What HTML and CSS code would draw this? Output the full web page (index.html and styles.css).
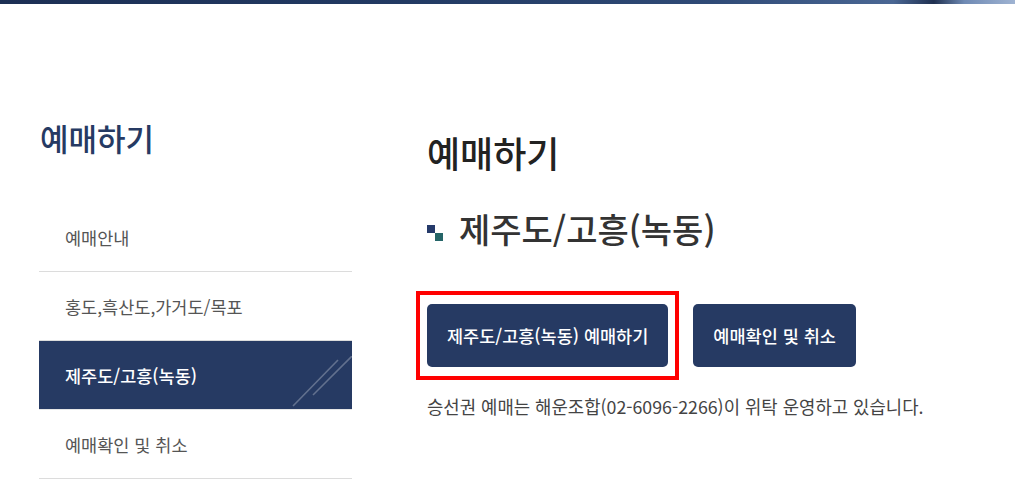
FILE: index.html
```html
<!DOCTYPE html>
<html lang="ko">
<head>
<meta charset="utf-8">
<title>예매하기</title>
<link rel="stylesheet" href="styles.css">
</head>
<body>
<div class="top-strip"></div>
<div class="page">
  <aside class="sidebar">
    <h2 class="side-title">예매하기</h2>
    <ul class="side-menu">
      <li class="side-item"><a href="#">예매안내</a></li>
      <li class="side-item"><a href="#">홍도,흑산도,가거도/목포</a></li>
      <li class="side-item active"><a href="#">제주도/고흥(녹동)</a>
        <svg class="deco" width="64" height="52" viewBox="0 0 64 52"><line x1="5" y1="50" x2="50" y2="4" stroke="rgba(255,255,255,0.28)" stroke-width="1.6"/><line x1="25" y1="39" x2="64" y2="0" stroke="rgba(255,255,255,0.28)" stroke-width="1.6"/></svg>
      </li>
      <li class="side-item"><a href="#">예매확인 및 취소</a></li>
    </ul>
  </aside>
  <main class="content">
    <h1 class="page-title">예매하기</h1>
    <h3 class="sub-title"><span class="bullet"><i class="sq1"></i><i class="sq2"></i></span>제주도/고흥(녹동)</h3>
    <div class="btn-row">
      <div class="btn-wrap"><a class="btn" href="#">제주도/고흥(녹동) 예매하기</a><span class="highlight"></span></div>
      <a class="btn" href="#">예매확인 및 취소</a>
    </div>
    <p class="note">승선권 예매는 해운조합(02-6096-2266)이 위탁 운영하고 있습니다.</p>
  </main>
</div>
</body>
</html>
```
FILE: styles.css
```css
* { box-sizing: border-box; }
html, body { margin: 0; padding: 0; background: #fff; }
body { font-family: "Noto Sans CJK KR", "Noto Sans", sans-serif; color: #333; overflow: hidden; }
.top-strip {
  height: 4px;
  background: linear-gradient(90deg, #1c2f54 0%, #223a63 40%, #2f4a76 70%, #4a6794 88%, #1f3050 92%, #6f8ab4 95%, #9fb3d2 100%);
}
.page { display: flex; padding-left: 39px; }
.sidebar { width: 313px; flex: none; padding-top: 112px; }
.side-title {
  margin: 0;
  font-size: 31px;
  line-height: 44px;
  font-weight: 500;
  color: #263a63;
  padding-left: 1px;
}
.side-menu { list-style: none; margin: 43px 0 0; padding: 0; }
.side-item {
  position: relative;
  height: 69px;
  border-bottom: 1px solid #dcdcdc;
  display: flex;
  align-items: center;
  padding-left: 26px;
  overflow: hidden;
}
.side-item a { color: #555; text-decoration: none; font-size: 17.5px; }
.side-item.active { background: #263a63; border-bottom-color: #e6e6e6; }
.side-item.active a { color: #fff; font-weight: 500; }
.deco { position: absolute; right: 0; bottom: 1px; }
.content { margin-left: 75px; padding-top: 118px; }
.page-title {
  margin: 0;
  font-size: 36px;
  line-height: 60px;
  font-weight: 500;
  color: #222;
}
.sub-title {
  margin: 22px 0 0;
  display: flex;
  align-items: center;
  font-size: 34px;
  line-height: 50px;
  font-weight: 500;
  color: #333;
}
.bullet { position: relative; width: 16px; height: 17px; margin-right: 16px; margin-top: 8px; flex: none; }
.bullet i { position: absolute; width: 8px; height: 8px; }
.sq1 { left: 0; top: 0; background: #253a6a; }
.sq2 { left: 8px; top: 8px; background: #256568; }
.btn-row { display: flex; gap: 25px; margin-top: 50px; }
.btn-wrap { position: relative; }
.btn {
  display: flex;
  align-items: center;
  justify-content: center;
  height: 63px;
  padding: 0 20px;
  background: #263a63;
  color: #fff;
  text-decoration: none;
  border-radius: 5px;
  font-size: 17.5px;
  font-weight: 500;
}
.highlight {
  position: absolute;
  left: -11px; right: -11px; top: -13px; bottom: -13px;
  border: 4px solid #ff0000;
  pointer-events: none;
}
.note { margin: 26px 0 0; font-size: 17.8px; color: #444; line-height: 26px; }
```
